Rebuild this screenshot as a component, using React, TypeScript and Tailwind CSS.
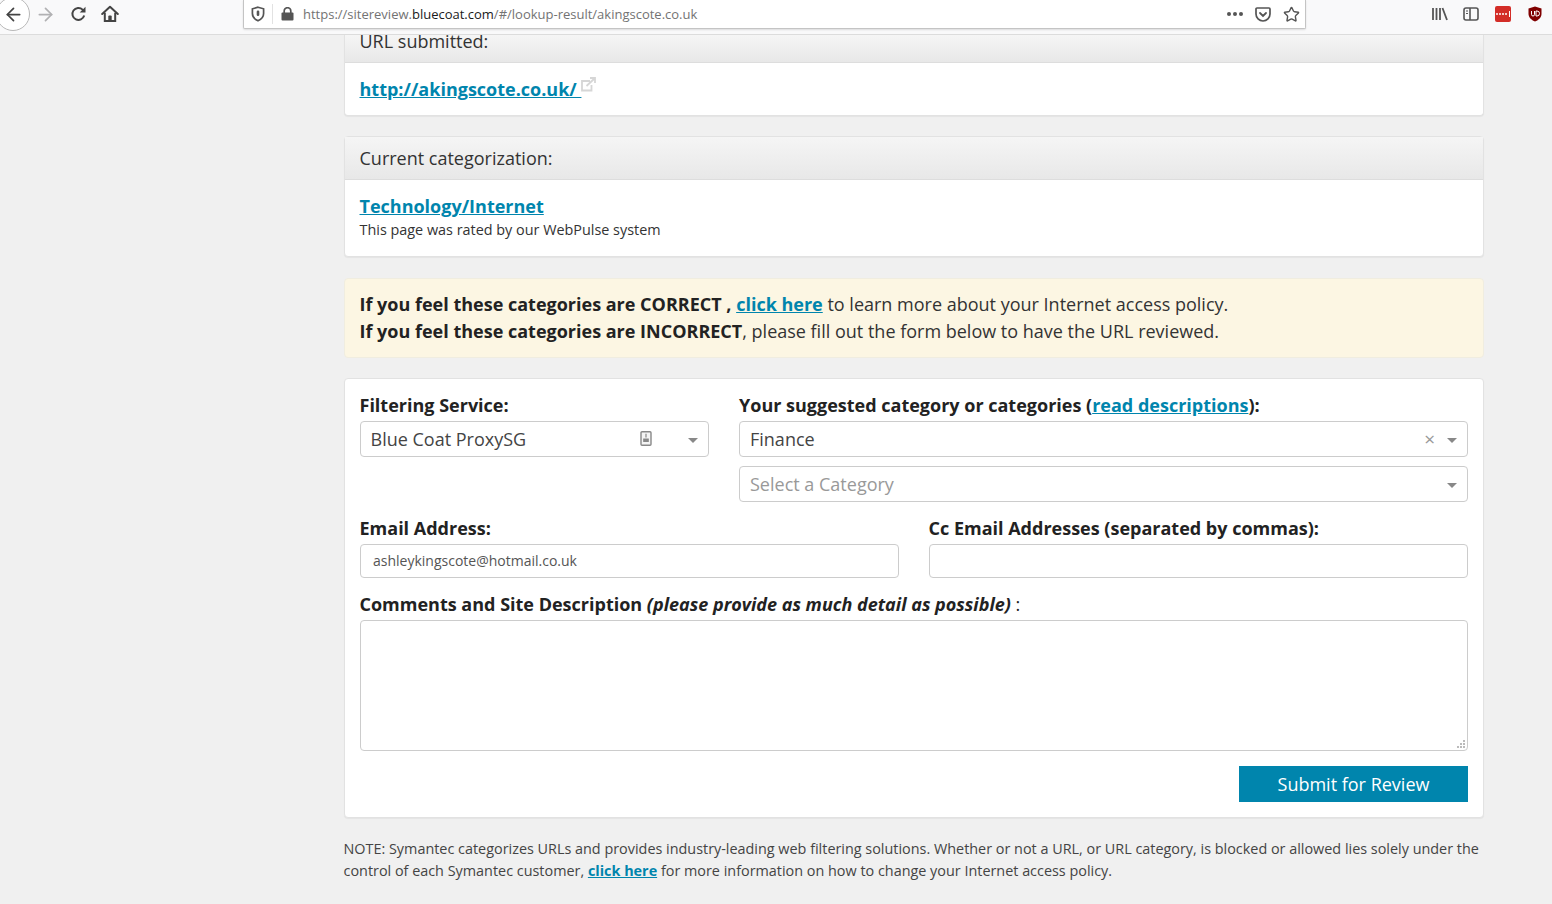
import React from 'react';
import { ArrowLeft, ArrowRight, Star } from 'lucide-react';

const Caret = () => (
  <span className="w-0 h-0 mt-[2px] border-x-[5px] border-x-transparent border-t-[5px] border-t-[#888]" />
);

const Toolbar = () => (
  <div className="h-[35px] shrink-0 bg-[#f9f9fa] border-b border-[#dcdcdc] flex items-start relative z-10">
    {/* nav buttons */}
    <div className="relative w-[243px] h-[34px] shrink-0">
      <div className="absolute -left-[4px] -top-[3px] w-[34px] h-[34px] rounded-full border border-[#b8b8b8] bg-white flex items-center justify-center">
        <ArrowLeft size={21} strokeWidth={2} className="text-[#444]" />
      </div>
      <ArrowRight size={21} strokeWidth={2} className="absolute left-[35px] top-[4px] text-[#b1b1b3]" />
      <svg width="17" height="16" viewBox="0 0 17 16" className="absolute left-[70px] top-[6px]">
        <path d="M14.2 9.5 A6 6 0 1 1 12.6 3.6 L14.4 5.4" fill="none" stroke="#444" strokeWidth="2" />
        <path d="M15.5 0.8 V6.6 H9.7 Z" fill="#444" />
      </svg>
      <svg width="18" height="18" viewBox="0 0 18 18" className="absolute left-[101px] top-[5px]">
        <path d="M1.2 9 L9 1.8 L16.8 9" fill="none" stroke="#444" strokeWidth="2" strokeLinecap="round" strokeLinejoin="round" />
        <path d="M3.8 7.8 V16 H14.2 V7.8" fill="none" stroke="#444" strokeWidth="2" />
        <rect x="7.3" y="10.5" width="3.4" height="5.5" rx="1" fill="#444" />
      </svg>
    </div>
    {/* url bar */}
    <div className="w-[1063px] h-[29px] bg-white border border-t-0 border-[#c4c4c4] rounded-b-[2px] shadow-[0_1px_2px_rgba(0,0,0,0.12)] flex items-center">
      <svg width="14" height="16" viewBox="0 0 14 16" className="ml-[7px] shrink-0">
        <path d="M7 1.2 L12.6 2.8 V7.5 C12.6 11 10 13.4 7 14.8 C4 13.4 1.4 11 1.4 7.5 V2.8 Z" fill="none" stroke="#555" strokeWidth="1.7" />
        <rect x="5.7" y="4.6" width="2.6" height="5.4" rx="1.2" fill="#555" />
      </svg>
      <div className="w-px h-[20px] bg-[#e2e2e2] ml-[7px]" />
      <svg width="13" height="14" viewBox="0 0 13 14" className="ml-[8px] shrink-0">
        <path d="M3.2 6 V4 A3.3 3.3 0 0 1 9.8 4 V6" fill="none" stroke="#555" strokeWidth="1.7" />
        <rect x="0.5" y="5.6" width="12" height="8" rx="1" fill="#555" />
      </svg>
      <div className="ml-[9px] text-[13px] font-['Open_Sans',sans-serif] text-[#737373] flex-1 pt-[2px]">
        https://sitereview.<span className="text-[#1a1a1a]">bluecoat.com</span>/#/lookup-result/akingscote.co.uk
      </div>
      <div className="flex gap-[2px] mr-[12px]">
        <span className="w-[4px] h-[4px] rounded-full bg-[#555]" />
        <span className="w-[4px] h-[4px] rounded-full bg-[#555]" />
        <span className="w-[4px] h-[4px] rounded-full bg-[#555]" />
      </div>
      <svg width="16" height="15" viewBox="0 0 16 15" className="mr-[12px] shrink-0">
        <path d="M2 1 H14 A1 1 0 0 1 15 2 V7 A7 7 0 0 1 1 7 V2 A1 1 0 0 1 2 1 Z" fill="none" stroke="#555" strokeWidth="1.7" />
        <path d="M5 6 L8 9 L11 6" fill="none" stroke="#555" strokeWidth="1.8" strokeLinecap="round" />
      </svg>
      <Star size={17} strokeWidth={2} className="text-[#555] mr-[5px] shrink-0" />
    </div>
    {/* right side toolbar icons */}
    <div className="flex-1 relative h-[34px]">
      <svg width="16" height="14" viewBox="0 0 16 14" className="absolute left-[126px] top-[7px]">
        <path d="M1 1 V13 M4.5 1 V13 M8 1 V13 M10.5 1 L15 13" stroke="#555" strokeWidth="1.8" fill="none" />
      </svg>
      <svg width="16" height="14" viewBox="0 0 16 14" className="absolute left-[157px] top-[7px]">
        <rect x="1" y="1" width="14" height="12" rx="2" fill="none" stroke="#555" strokeWidth="1.6" />
        <path d="M7 1 V13" stroke="#555" strokeWidth="1.6" />
        <path d="M3 4 H5 M3 6.5 H5" stroke="#555" strokeWidth="1.2" />
      </svg>
      <div className="absolute left-[189px] top-[6px] w-[16px] h-[16px] rounded-[2px] bg-[#d32d27] flex items-center justify-center gap-[1px]">
        <span className="w-[2px] h-[2px] rounded-full bg-white" />
        <span className="w-[2px] h-[2px] rounded-full bg-white" />
        <span className="w-[2px] h-[2px] rounded-full bg-white" />
        <span className="w-[2px] h-[2px] rounded-full bg-white" />
        <span className="w-px h-[6px] bg-white ml-[1px]" />
      </div>
      <svg width="14" height="16" viewBox="0 0 14 16" className="absolute left-[222px] top-[6px]">
        <path d="M7 0.5 L13.5 2.5 V8 C13.5 11.5 10 14.5 7 15.5 C4 14.5 0.5 11.5 0.5 8 V2.5 Z" fill="#800000" />
        <path d="M3.5 5 V8.5 A1.5 1.5 0 0 0 6.5 8.5 V5 M8 5 V10 H9 A2.5 2.5 0 0 0 9 5 Z" fill="none" stroke="#fff" strokeWidth="1" />
      </svg>
    </div>
  </div>
);

const CardHeader = ({ children, className }: { children: React.ReactNode; className: string }) => (
  <div className={`bg-gradient-to-b from-[#f5f5f5] to-[#e8e8e8] border-b border-[#ddd] px-[14.5px] text-[18px] text-[#333] ${className}`}>
    {children}
  </div>
);

const inputClass = 'h-[34px] w-full bg-white border border-[#ccc] rounded-[4px] px-3 text-[14px] text-[#555]';
const labelClass = 'text-[18px] font-bold leading-[25px] text-[#222] mb-[3px] -ml-[0.5px]';

export default function App() {
  return (
    <div className="h-[904px] overflow-hidden bg-[#f0f0f0] flex flex-col font-['Open_Sans',sans-serif] text-[#222]">
      <Toolbar />
      <div className="ml-[344px] w-[1140px]">
        {/* URL submitted */}
        <div className="bg-white border border-t-0 border-[#e2e2e2] rounded-b-[4px] shadow-[0_1px_1px_rgba(0,0,0,0.05)]">
          <CardHeader className="h-[28px] leading-[13px]">URL submitted:</CardHeader>
          <div className="h-[52px] px-[14.5px] pt-[12px] flex items-start">
            <a className="text-[18px] font-bold leading-[28px] text-[#0085ad] underline whitespace-pre">http://akingscote.co.uk/ </a>
            <svg width="16" height="16" viewBox="0 0 16 16" className="mt-[2px] -ml-px">
              <path d="M10 4 H2 V13.5 H11.5 V8" fill="none" stroke="#d6d6d6" strokeWidth="1.8" />
              <path d="M6.5 9 L14.5 1.5 M10 1 H15 V6" fill="none" stroke="#d6d6d6" strokeWidth="1.8" />
            </svg>
          </div>
        </div>

        {/* Current categorization */}
        <div className="mt-[20px] bg-white border border-[#e2e2e2] rounded-[4px] shadow-[0_1px_1px_rgba(0,0,0,0.05)]">
          <CardHeader className="h-[43px] leading-[43px]">Current categorization:</CardHeader>
          <div className="h-[76px] px-[14.5px] pt-[12px]">
            <a className="block text-[18px] font-bold leading-[28px] text-[#0085ad] underline">Technology/Internet</a>
            <p className="text-[14.4px] leading-[19px] text-[#333]">This page was rated by our WebPulse system</p>
          </div>
        </div>

        {/* Alert */}
        <div className="mt-[21px] h-[80px] bg-[#fcf6e3] border border-[#f0ede0] rounded-[4px] px-[14.5px] pt-[12px] text-[18px] leading-[27px] text-[#333]">
          <p>
            <b className="text-[#222]">If you feel these categories are CORRECT ,</b>{' '}
            <a className="font-bold text-[#0085ad] underline">click here</a> to learn more about your Internet access policy.
          </p>
          <p>
            <b className="text-[#222]">If you feel these categories are INCORRECT</b>, please fill out the form below to have the URL reviewed.
          </p>
        </div>

        {/* Form */}
        <div className="mt-[20px] h-[440px] bg-white border border-[#e2e2e2] rounded-[4px] shadow-[0_1px_1px_rgba(0,0,0,0.05)] px-[15px] pt-[14px]">
          <div className="grid grid-cols-[349px_729px] gap-x-[30px]">
            <div>
              <div className={labelClass}>Filtering Service:</div>
              <div className="h-[36px] border border-[#ccc] rounded-[4px] pl-[10px] pr-[10px] flex items-center text-[18px] text-[#444]">
                <span className="flex-1 -ml-[0.5px]">Blue Coat ProxySG</span>
                <svg width="12" height="15" viewBox="0 0 12 15" className="mr-[36px] -mt-[2px]">
                  <rect x="1" y="0.8" width="10" height="13.4" rx="1" fill="#f4f4f4" stroke="#888" strokeWidth="1.4" />
                  <path d="M6 2.8 V6.6 M3.8 8 H8.2 V10.5 H3.8 Z" stroke="#888" strokeWidth="1.2" fill="#888" />
                </svg>
                <Caret />
              </div>
            </div>
            <div>
              <div className="text-[18px] font-bold leading-[25px] text-[#222] mb-[3px]">
                Your suggested category or categories (<a className="text-[#0085ad] underline">read descriptions</a>):
              </div>
              <div className="h-[36px] border border-[#ccc] rounded-[4px] pl-[10px] pr-[10px] flex items-center text-[18px] text-[#444]">
                <span className="flex-1">Finance</span>
                <span className="mr-[12px] text-[19px] leading-none text-[#999]">×</span>
                <Caret />
              </div>
              <div className="mt-[9px] h-[36px] border border-[#ccc] rounded-[4px] pl-[10px] pr-[10px] flex items-center text-[18px] text-[#999]">
                <span className="flex-1">Select a Category</span>
                <Caret />
              </div>
            </div>
          </div>

          <div className="grid grid-cols-2 gap-x-[30px] mt-[14px]">
            <div>
              <div className={labelClass}>Email Address:</div>
              <div className={`${inputClass} flex items-center pb-[2px]`}>ashleykingscote@hotmail.co.uk</div>
            </div>
            <div>
              <div className={labelClass}>Cc Email Addresses (separated by commas):</div>
              <div className={inputClass} />
            </div>
          </div>

          <div className="mt-[14px] text-[18px] font-bold leading-[25px] text-[#222] -ml-[0.5px]">
            Comments and Site Description <i>(please provide as much detail as possible)</i> <span className="font-normal">:</span>
          </div>
          <div className="relative mt-[3px] h-[131px] border border-[#ccc] rounded-[4px]">
            <svg width="9" height="9" viewBox="0 0 9 9" className="absolute right-[1px] bottom-[1px]">
              <path d="M6 0h2v2h-2zM3 3h2v2h-2zM6 3h2v2h-2zM0 6h2v2h-2zM3 6h2v2h-2zM6 6h2v2h-2z" fill="#bbb" />
            </svg>
          </div>
          <div className="mt-[15px] flex justify-end">
            <button className="w-[229px] h-[36px] bg-[#0085ad] text-white text-[18px]">Submit for Review</button>
          </div>
        </div>

        {/* Note */}
        <p className="mt-[20px] text-[14.4px] leading-[22px] text-[#444] -ml-[0.5px]">
          NOTE: Symantec categorizes URLs and provides industry-leading web filtering solutions. Whether or not a URL, or URL category, is blocked or allowed lies solely under the control of each Symantec customer, <a className="font-bold text-[#0085ad] underline">click here</a> for more information on how to change your Internet access policy.
        </p>
      </div>
    </div>
  );
}
